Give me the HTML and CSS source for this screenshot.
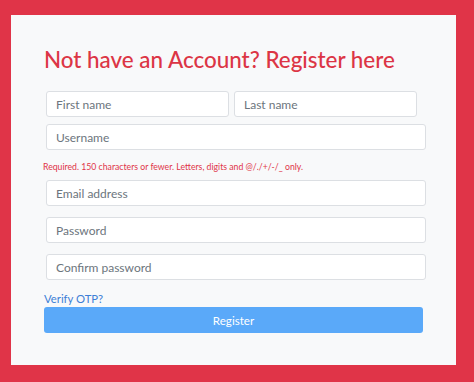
FILE: index.html
```html
<!DOCTYPE html>
<html lang="en">
<head>
    <meta charset="UTF-8">
    <meta name="viewport" content="width=device-width, initial-scale=1.0">
    <title>Register</title>
    <link rel="stylesheet" href="styles.css">
</head>
<body>
    <div class="register-container">
        <h1>Not have an Account? Register here</h1>
        <form class="register-form">
            <div class="name-row">
                <input type="text" placeholder="First name">
                <input type="text" placeholder="Last name">
            </div>
            <input type="text" class="field" placeholder="Username">
            <small class="help-text">Required. 150 characters or fewer. Letters, digits and @/./+/-/_ only.</small>
            <input type="email" class="field" placeholder="Email address">
            <input type="password" class="field" placeholder="Password">
            <input type="password" class="field" placeholder="Confirm password">
        </form>
        <a href="#" class="otp-link">Verify OTP?</a>
        <button class="btn">Register</button>
    </div>
</body>
</html>
```

FILE: styles.css
```css
body {
    font-family: Lato, Arial, sans-serif;
    margin: 0;
    padding: 15px 18px 17px 11px;
    background-color: #e03448;
}
.register-container {
    background: #f8f9fa;
    height: 350px;
    box-sizing: border-box;
    padding: 30px 33px 0 33px;
}
.register-container h1 {
    font-size: 22.4px;
    font-weight: 500;
    color: #dc3545;
    margin: 0 0 16px 0;
    line-height: 30px;
}
.register-form {
    margin-left: 2px;
}
.name-row {
    display: flex;
    gap: 5px;
    width: 371px;
    margin-bottom: 7px;
}
.name-row input {
    flex: 1;
    min-width: 0;
}
.register-form input {
    display: block;
    height: 26px;
    box-sizing: border-box;
    padding: 0 9px;
    border: 1px solid #dcdfe3;
    border-radius: 3px;
    background: #fff;
    font-family: inherit;
    font-size: 12px;
    color: #495057;
}
.register-form input::placeholder {
    color: #6c757d;
}
.field {
    width: 380px;
    margin-bottom: 11px;
}
.help-text {
    display: block;
    font-size: 8.7px;
    color: #e03448;
    margin: 2px 0 7px -3px;
    line-height: 12px;
}
.otp-link {
    display: block;
    color: #3d7fd6;
    font-size: 11.3px;
    text-decoration: none;
    margin-top: 7px;
    line-height: 16px;
}
.btn {
    display: block;
    width: 379px;
    height: 26px;
    background: #5aa9f9;
    color: #fff;
    border: none;
    border-radius: 3px;
    font-family: inherit;
    font-size: 11.6px;
}
```
